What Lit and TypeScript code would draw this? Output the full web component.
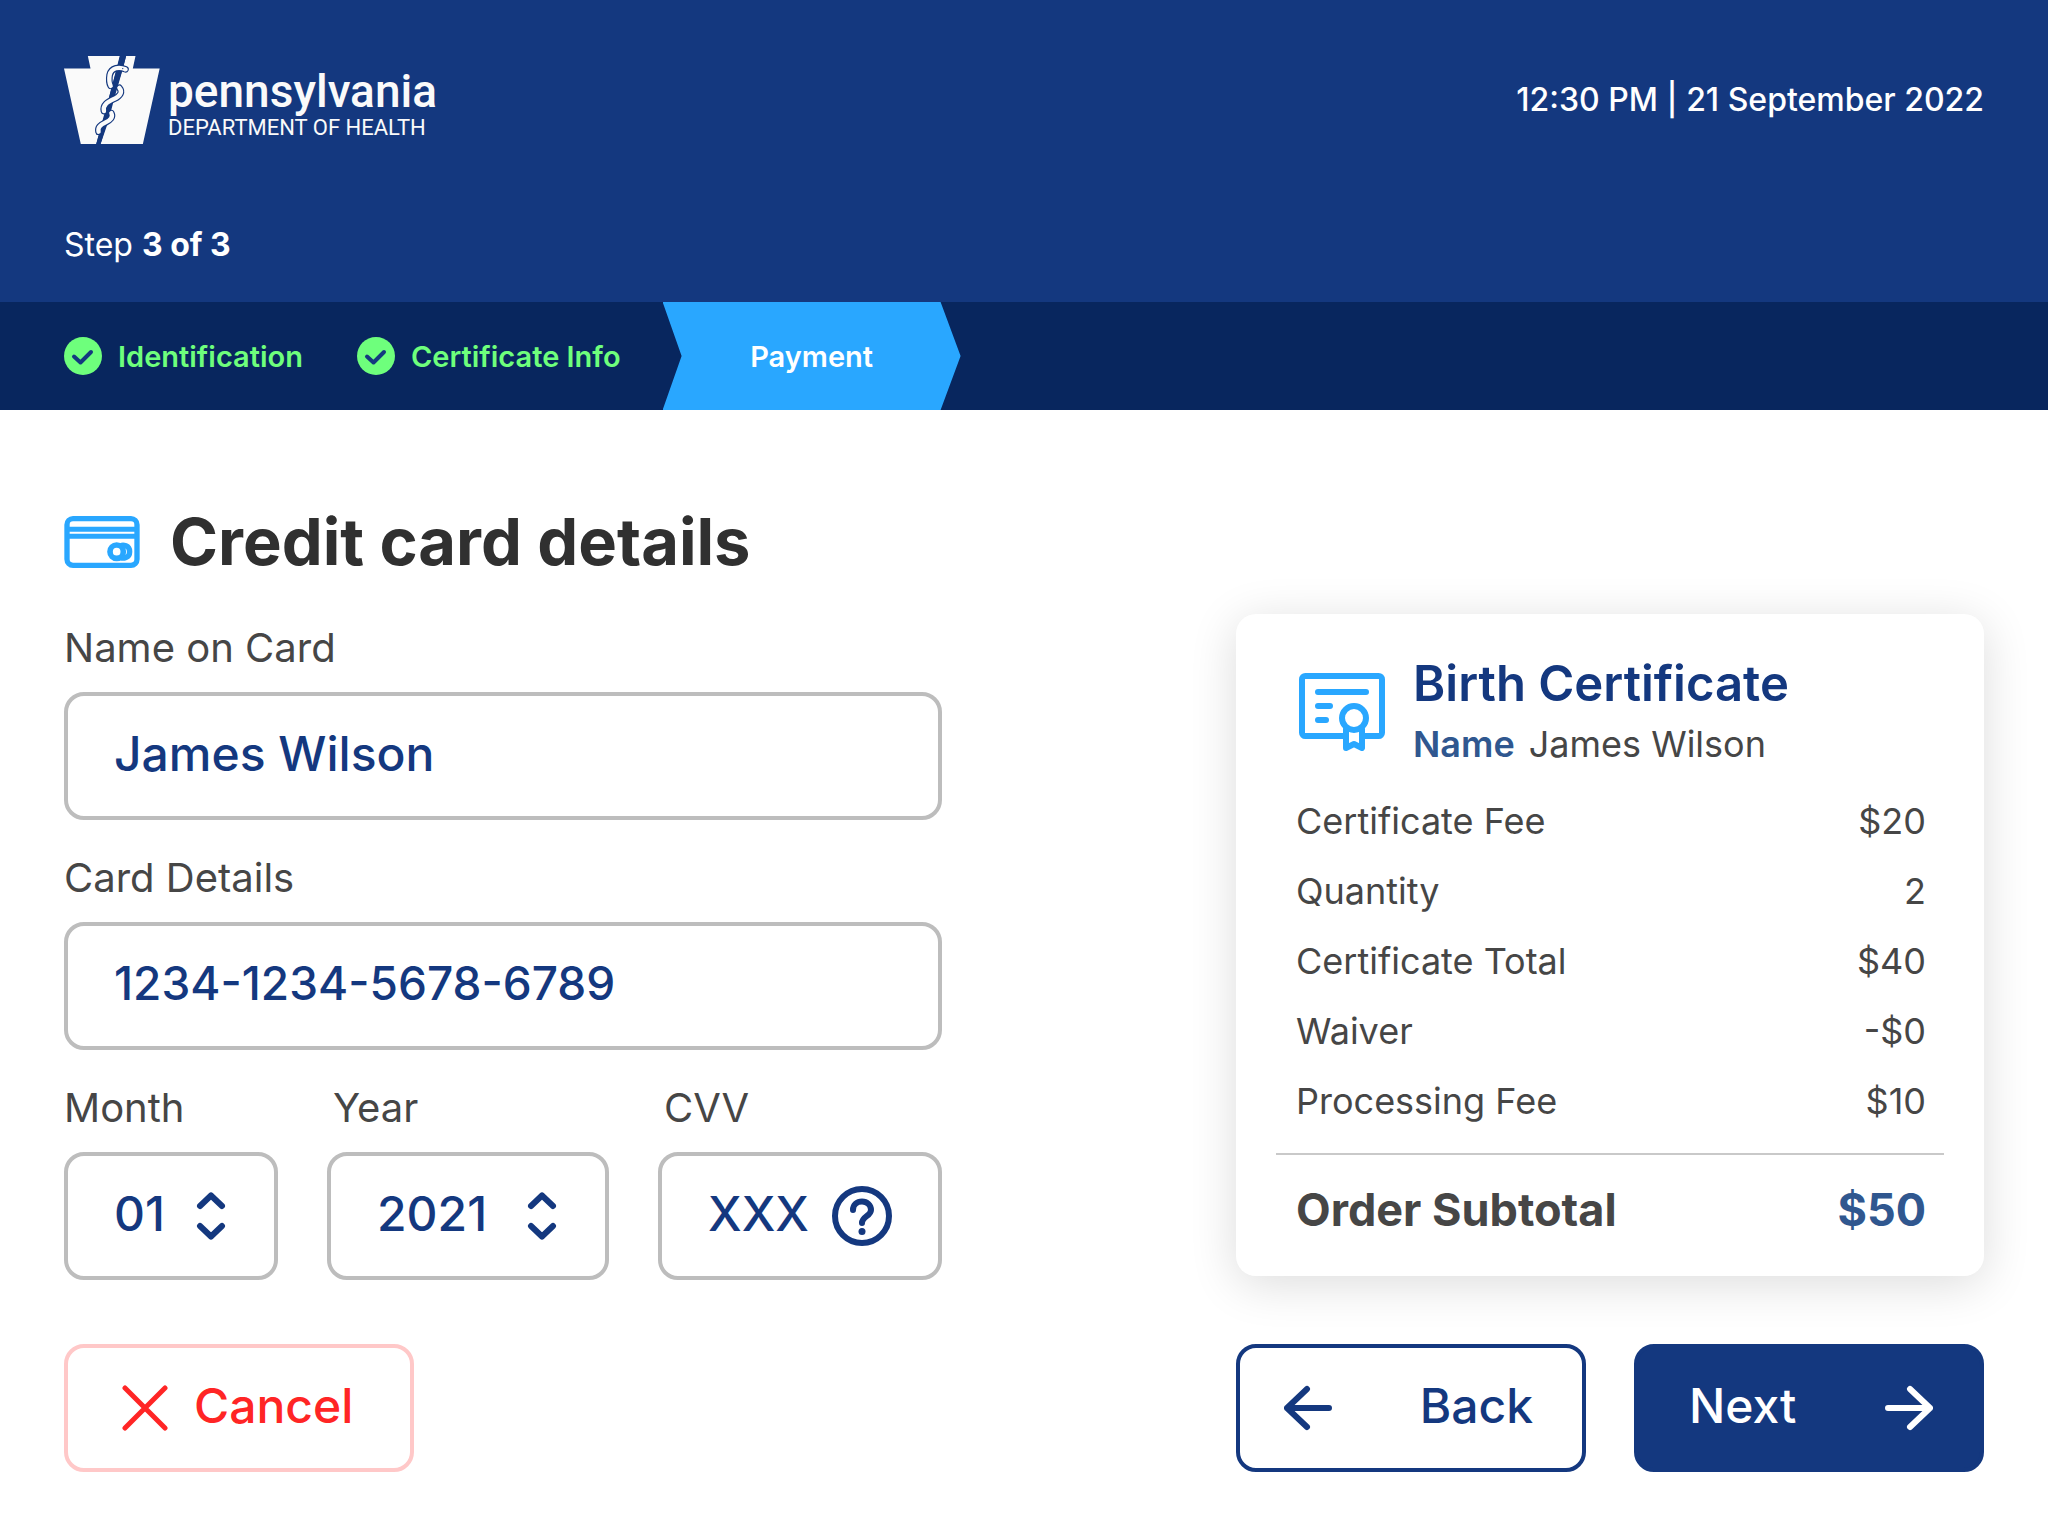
import { LitElement, html, css, svg } from "lit";
import { customElement, state } from "lit/decorators.js";

const navy = "#14387f";

const coils = [
  "M183 40C165 32 141 34 136 57C134 70 135 82 139 90",
  "M165 96C175 108 168 120 150 129C128 139 115 148 119 166",
  "M141 172C147 184 138 193 124 200C108 208 100 214 103 228",
];

const keystone = svg`
  <path fill="#fafafa" d="M71 0H167L158 36L138 110L118 190L96 265H50L0 38H79Z"/>
  <path fill="#fafafa" d="M185 0H213L205 38H285L235 265H109L128 200L150 120L175 38Z"/>
  <path fill="${navy}" d="M166 0H185L175 40L152 120L131 200L109 265H96L116 190L138 110L157 36Z"/>
  <g fill="none" stroke-linecap="round" stroke-linejoin="round">
    ${coils.map((d) => svg`<path stroke="${navy}" stroke-width="20" d=${d}/><path stroke="#fafafa" stroke-width="13" d=${d}/>`)}
  </g>
  <path d="M176 32L191 42L180 47Z" fill="#fafafa"/>
  <circle cx="175" cy="38" r="2" fill="${navy}"/>
`;

interface Fee {
  label: string;
  value: string;
}

@customElement("app-root")
export class AppRoot extends LitElement {
  static styles = css`
    :host {
      --navy: #14387f;
      --sky: #29a7ff;
      --ink: #464646;
      display: block;
      min-height: 100vh;
      background: #fff;
      color: var(--ink);
      font-family: Inter, "Liberation Sans", sans-serif;
    }
    * {
      box-sizing: border-box;
    }
    svg {
      display: block;
      flex: none;
    }
    h1,
    h2,
    p,
    ol {
      margin: 0;
      padding: 0;
    }
    .header {
      background: var(--navy);
      color: #fff;
      padding: 56px 64px 33px;
    }
    .top {
      display: flex;
      align-items: center;
      justify-content: space-between;
    }
    .brand {
      display: flex;
      gap: 8px;
      color: #fafafa;
      text-decoration: none;
      font-family: Roboto, "Open Sans", sans-serif;
    }
    .words {
      display: flex;
      flex-direction: column;
      padding-top: 10px;
    }
    .state {
      font-size: 46px;
      font-weight: 500;
      line-height: 50px;
    }
    .dept {
      font-size: 22px;
      line-height: 24px;
    }
    .clock {
      font-size: 32px;
      font-weight: 500;
      line-height: 48px;
    }
    .progress {
      margin-top: 77px;
      font-size: 32px;
      font-weight: 400;
      line-height: 48px;
    }
    .progress strong {
      font-weight: 700;
    }
    .steps {
      display: flex;
      align-items: center;
      height: 108px;
      padding-left: 64px;
      background: #08265e;
      list-style: none;
      font-size: 29px;
      font-weight: 600;
    }
    .done {
      display: flex;
      align-items: center;
      gap: 16px;
      color: #6eff7c;
    }
    .done + .done {
      margin-left: 54px;
    }
    .current {
      display: flex;
      align-items: center;
      justify-content: center;
      width: 298px;
      height: 100%;
      margin-left: 42px;
      background: var(--sky);
      color: #fff;
      clip-path: polygon(0 0, 278px 0, 100% 50%, 278px 100%, 0 100%, 19px 50%);
    }
    .main {
      padding: 92px 64px 64px;
    }
    .heading {
      display: flex;
      align-items: center;
      gap: 30px;
    }
    .heading h1 {
      color: #303030;
      font-size: 65px;
      font-weight: 700;
      line-height: 80px;
    }
    .columns {
      display: grid;
      grid-template-columns: 54fr 46fr;
      column-gap: 294px;
    }
    .left {
      display: flex;
      flex-direction: column;
      gap: 34px;
      padding-top: 42px;
    }
    .trio {
      display: grid;
      grid-template-columns: 214fr 282fr 284fr;
      gap: 49px;
    }
    .field {
      display: flex;
      flex-direction: column;
      gap: 20px;
      min-width: 0;
    }
    .field label {
      font-size: 40px;
      font-weight: 400;
      line-height: 48px;
    }
    .field .inset {
      padding-left: 6px;
    }
    .box {
      display: flex;
      align-items: center;
      height: 128px;
      padding: 0;
      border: 4px solid #bdbdbd;
      border-radius: 20px;
      color: var(--navy);
      position: relative;
    }
    .control {
      appearance: none;
      width: 100%;
      height: 100%;
      min-width: 0;
      margin: 0;
      padding: 0 44px 6px 46px;
      border: 0;
      border-radius: 16px;
      outline: 0;
      background: none;
      color: inherit;
      font: inherit;
      font-size: 48px;
      font-weight: 500;
    }
    .number {
      font-size: 46px;
    }
    .box:focus-within {
      border-color: var(--navy);
    }
    .chevrons {
      position: absolute;
      right: 48px;
      pointer-events: none;
    }
    .help {
      position: absolute;
      right: 45px;
      padding: 0;
      border: 0;
      background: none;
      color: inherit;
      cursor: pointer;
    }
    .card {
      align-self: end;
      margin-top: -50px;
      margin-bottom: 4px;
      padding: 41px 40px 30px;
      border-radius: 20px;
      background: #fff;
      box-shadow: 0 8px 48px rgba(0, 0, 0, 0.14);
    }
    .summary {
      display: flex;
      align-items: flex-start;
      gap: 28px;
      padding-left: 23px;
    }
    .summary svg {
      margin-top: 18px;
    }
    .summary h2 {
      color: var(--navy);
      font-size: 49px;
      font-weight: 600;
      line-height: 58px;
    }
    .who {
      display: flex;
      gap: 14px;
      margin-top: 7px;
      font-size: 36px;
      font-weight: 400;
      line-height: 48px;
    }
    .who strong {
      color: #30578f;
      font-weight: 600;
    }
    .fees {
      width: 100%;
      margin-top: 18px;
      border-collapse: collapse;
      font-size: 36px;
      line-height: 70px;
    }
    .fees th,
    .fees td {
      padding: 0 18px 0 20px;
      font-weight: 400;
      text-align: left;
    }
    .fees td {
      text-align: right;
    }
    .fees tbody tr:last-child > * {
      padding-bottom: 17px;
    }
    .fees tfoot th,
    .fees tfoot td {
      padding-top: 19px;
      border-top: 2px solid #c9c9c9;
      font-size: 45px;
      font-weight: 700;
      line-height: 72px;
    }
    .fees tfoot td {
      color: #30578f;
    }
    .actions {
      display: grid;
      grid-template-columns: 54fr 46fr;
      column-gap: 294px;
      margin-top: 64px;
    }
    .pair {
      display: grid;
      grid-template-columns: 1fr 1fr;
      gap: 48px;
    }
    .button {
      display: flex;
      align-items: center;
      justify-content: space-between;
      height: 128px;
      padding: 0 49px 0 44px;
      border: 4px solid var(--navy);
      border-radius: 20px;
      background: #fff;
      color: var(--navy);
      font: inherit;
      font-size: 48px;
      font-weight: 500;
      cursor: pointer;
    }
    .button span {
      padding-bottom: 6px;
    }
    .next {
      padding: 0 47px 0 51px;
      background: var(--navy);
      color: #fff;
    }
    .cancel {
      justify-content: flex-start;
      gap: 26px;
      width: 350px;
      padding-left: 54px;
      border-color: #ffc8c8;
      color: #ff2525;
    }
  `;

  @state() private name = "James Wilson";
  @state() private card = "1234-1234-5678-6789";

  private fees: Fee[] = [
    { label: "Certificate Fee", value: "$20" },
    { label: "Quantity", value: "2" },
    { label: "Certificate Total", value: "$40" },
    { label: "Waiver", value: "-$0" },
    { label: "Processing Fee", value: "$10" },
  ];

  private doneStep(label: string) {
    return html`<li class="done">
      <svg width="38" height="38" viewBox="0 0 38 38" aria-hidden="true">
        <circle cx="19" cy="19" r="19" fill="#6eff7c" />
        <path d="M10 19.500L16.500 25.500L27 15" fill="none" stroke="#14387f" stroke-width="4" stroke-linecap="round" stroke-linejoin="round" />
      </svg>
      <span>${label}</span>
    </li>`;
  }

  private chevrons() {
    return html`<svg class="chevrons" width="30" height="48" viewBox="0 0 30 48" fill="none" stroke="currentColor" stroke-width="6" stroke-linecap="round" stroke-linejoin="round" aria-hidden="true">
      <path d="M4 14L15 3.500L26 14M4 34L15 44.500L26 34" />
    </svg>`;
  }

  private selectField(id: string, label: string, value: string, options: string[], labelClass = "") {
    return html`<div class="field">
      <label class=${labelClass} for=${id}>${label}</label>
      <div class="box">
        <select class="control" id=${id}>
          ${options.map((o) => html`<option ?selected=${o === value}>${o}</option>`)}
        </select>
        ${this.chevrons()}
      </div>
    </div>`;
  }

  private arrow(d: string) {
    return html`<svg width="48" height="46" viewBox="0 0 48 46" fill="none" stroke="currentColor" stroke-width="6" stroke-linecap="round" stroke-linejoin="round" aria-hidden="true"><path d=${d} /></svg>`;
  }

  render() {
    return html`
      <header class="header">
        <div class="top">
          <a class="brand" href="#">
            <svg width="96" height="88" viewBox="0 0 286 265" preserveAspectRatio="none" aria-hidden="true">${keystone}</svg>
            <span class="words">
              <span class="state">pennsylvania</span>
              <span class="dept">DEPARTMENT OF HEALTH</span>
            </span>
          </a>
          <p class="clock">12:30 PM | 21 September 2022</p>
        </div>
        <p class="progress">Step <strong>3 of 3</strong></p>
      </header>
      <ol class="steps">
        ${this.doneStep("Identification")} ${this.doneStep("Certificate Info")}
        <li class="current" aria-current="step">Payment</li>
      </ol>
      <main class="main">
        <div class="heading">
          <svg width="76" height="52" viewBox="22 33 226 156" fill="none" stroke="#29a7ff" stroke-width="16" aria-hidden="true">
            <rect x="30" y="41" width="210" height="140" rx="18" />
            <path d="M32 73H238M32 94H238" stroke-width="15" />
            <circle cx="179" cy="140" r="20" stroke-width="17" />
            <path d="M192 122C197 119 218 120 218 140S197 161 192 158" />
          </svg>
          <h1>Credit card details</h1>
        </div>
        <div class="columns">
          <div class="left">
            <div class="field">
              <label for="name">Name on Card</label>
              <div class="box"><input class="control" id="name" type="text" .value=${this.name} /></div>
            </div>
            <div class="field">
              <label for="card">Card Details</label>
              <div class="box"><input class="control number" id="card" type="text" .value=${this.card} /></div>
            </div>
            <div class="trio">
              ${this.selectField("month", "Month", "01", ["01", "02", "03", "04", "05", "06", "07", "08", "09", "10", "11", "12"])}
              ${this.selectField("year", "Year", "2021", ["2021", "2022", "2023", "2024", "2025"], "inset")}
              <div class="field">
                <label class="inset" for="cvv">CVV</label>
                <div class="box">
                  <input class="control" id="cvv" type="text" value="XXX" maxlength="3" />
                  <button class="help" type="button" aria-label="About the CVV">
                    <svg width="62" height="62" viewBox="0 0 62 62" fill="none" stroke="currentColor" stroke-width="6" stroke-linecap="round" stroke-linejoin="round" aria-hidden="true">
                      <circle cx="31" cy="31" r="27" />
                      <path d="M22 25C22 19.500 26 16.500 31 16.500S40 20 40 25C40 31 31 31.500 31 38" />
                      <circle cx="31" cy="46.500" r="3.500" fill="currentColor" stroke="none" />
                    </svg>
                  </button>
                </div>
              </div>
            </div>
          </div>
          <section class="card" aria-labelledby="order">
            <div class="summary">
              <svg width="86" height="78" viewBox="27 39 258 234" fill="none" stroke="#29a7ff" stroke-width="18" stroke-linecap="round" stroke-linejoin="round" aria-hidden="true">
                <path d="M168 228H46A10 10 0 0 1 36 218V58A10 10 0 0 1 46 48H266A10 10 0 0 1 276 58V218A10 10 0 0 1 266 228H216" />
                <path d="M84 96H228M84 138H120M84 180H108" />
                <circle cx="192" cy="174" r="36" />
                <path d="M168 208V264L192 252L216 264V208" />
              </svg>
              <div>
                <h2 id="order">Birth Certificate</h2>
                <p class="who"><strong>Name</strong><span>James Wilson</span></p>
              </div>
            </div>
            <table class="fees">
              <tbody>
                ${this.fees.map((f) => html`<tr><th scope="row">${f.label}</th><td>${f.value}</td></tr>`)}
              </tbody>
              <tfoot>
                <tr><th scope="row">Order Subtotal</th><td>$50</td></tr>
              </tfoot>
            </table>
          </section>
        </div>
        <div class="actions">
          <button class="button cancel" type="button">
            <svg width="46" height="46" viewBox="0 0 46 46" fill="none" stroke="currentColor" stroke-width="5" stroke-linecap="round" aria-hidden="true"><path d="M3 3L43 43M43 3L3 43" /></svg>
            <span>Cancel</span>
          </button>
          <div class="pair">
            <button class="button" type="button">${this.arrow("M45 23H3M23 4L3 23L23 42")}<span>Back</span></button>
            <button class="button next" type="button"><span>Next</span>${this.arrow("M3 23H45M25 4L45 23L25 42")}</button>
          </div>
        </div>
      </main>
    `;
  }
}
